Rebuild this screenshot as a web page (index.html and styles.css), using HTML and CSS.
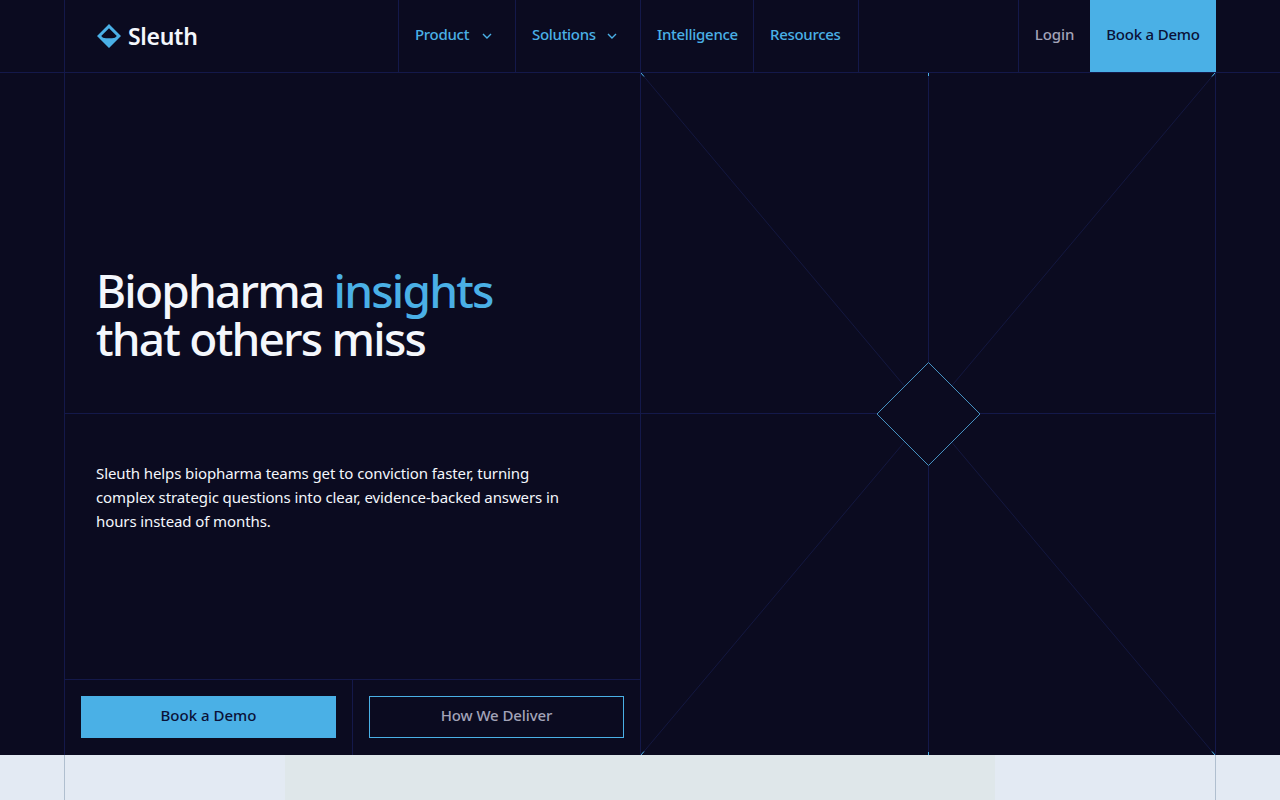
FILE: index.html
```html
<!DOCTYPE html>
<html lang="en">
<head>
  <meta charset="UTF-8">
  <title>Sleuth</title>
  <link rel="stylesheet" href="styles.css">
</head>
<body>
  <header class="topbar">
    <div class="topbar-inner">
      <a class="logo" href="#">
        <svg class="logo-mark" width="24" height="24" viewBox="0 0 24 24">
          <path d="M12 0 24 12 12 24 0 12Z M12 4.2 4.2 12 6 13.8Q12 14.8 18 13.8L19.8 12Z" fill="#4ab0e6" fill-rule="evenodd"/>
        </svg>
        <span>Sleuth</span>
      </a>
      <a class="nav-item" href="#">Product
        <svg class="chevron" width="10" height="6" viewBox="0 0 10 6"><path d="M1 1 5 5 9 1" fill="none" stroke="#4ab0e6" stroke-width="1.4"/></svg>
      </a>
      <a class="nav-item" href="#">Solutions
        <svg class="chevron" width="10" height="6" viewBox="0 0 10 6"><path d="M1 1 5 5 9 1" fill="none" stroke="#4ab0e6" stroke-width="1.4"/></svg>
      </a>
      <a class="nav-item" href="#">Intelligence</a>
      <a class="nav-item" href="#">Resources</a>
      <div class="nav-spacer"></div>
      <a class="nav-login" href="#">Login</a>
      <a class="nav-demo" href="#">Book a Demo</a>
    </div>
  </header>

  <main class="hero">
    <div class="hero-left">
      <div class="hero-title">
        <h1>Biopharma <span class="accent">insights</span><br>that others miss</h1>
      </div>
      <div class="hero-copy">
        <p>Sleuth helps biopharma teams get to conviction faster, turning complex strategic questions into clear, evidence-backed answers in hours instead of months.</p>
      </div>
      <div class="hero-actions">
        <div class="action-cell"><a class="button button-solid" href="#">Book a Demo</a></div>
        <div class="action-cell"><a class="button button-outline" href="#">How We Deliver</a></div>
      </div>
    </div>
    <svg class="hero-art" width="574" height="682" viewBox="0 0 574 682">
      <g stroke="#141840" fill="none">
        <path d="M0 0 574 682M574 0 0 682"/>
      </g>
      <g stroke="#14194a" fill="none">
        <path d="M287.5 0V682M0 340.5H574"/>
      </g>
      <path d="M287.5 289.5 339 341 287.5 392.5 236 341Z" fill="#0b0b20" stroke="#4590c0"/>
      <g stroke="#4ab0e6" fill="none">
        <path d="M287.5 0V3M287.5 682V679M0 0 3 3.5M574 0 571 3.5M0 682 3 678.5M574 682 571 678.5"/>
      </g>
    </svg>
  </main>

  <section class="next-section">
    <div class="next-inner">
      <div class="next-block"></div>
    </div>
  </section>
</body>
</html>
```

FILE: styles.css
```css
* {
  box-sizing: border-box;
}

body {
  margin: 0;
  background-color: #0b0b20;
  color: #f4f7fc;
  font-family: "Noto Sans", sans-serif;
}

a {
  text-decoration: none;
}

.topbar {
  height: 73px;
  border-bottom: 1px solid #14194a;
}

.topbar-inner {
  width: 1152px;
  height: 72px;
  margin: 0 auto;
  border-left: 1px solid #14194a;
  display: grid;
  grid-template-columns: 334px 117px 125px 113px 105px 160px 71px 126px;
}

.logo {
  display: flex;
  align-items: center;
  gap: 7px;
  padding-left: 32px;
  border-right: 1px solid #14194a;
  color: #f4f7fc;
  font-size: 23px;
  font-weight: 600;
  letter-spacing: -0.3px;
}

.nav-item {
  display: flex;
  align-items: center;
  justify-content: space-between;
  padding: 0 23px 4px 16px;
  border-right: 1px solid #14194a;
  color: #4ab0e6;
  font-size: 15px;
  font-weight: 500;
  letter-spacing: -0.3px;
}

.chevron {
  margin-top: 3px;
}

.nav-spacer {
  border-right: 1px solid #14194a;
}

.nav-login {
  display: flex;
  align-items: center;
  justify-content: center;
  padding-bottom: 4px;
  color: #a3a3b8;
  font-size: 15px;
  font-weight: 500;
  letter-spacing: -0.1px;
}

.nav-demo {
  display: flex;
  align-items: center;
  justify-content: center;
  padding-bottom: 4px;
  background-color: #4ab0e6;
  color: #0a1238;
  font-size: 15px;
  font-weight: 500;
  letter-spacing: -0.2px;
}

.hero {
  width: 1152px;
  height: 682px;
  margin: 0 auto;
  border-left: 1px solid #14194a;
  border-right: 1px solid #14194a;
  display: grid;
  grid-template-columns: 576px 574px;
}

.hero-left {
  display: grid;
  grid-template-rows: 341px 266px 75px;
  border-right: 1px solid #14194a;
}

.hero-title {
  display: flex;
  align-items: flex-end;
  padding: 0 31px 51px;
  border-bottom: 1px solid #14194a;
}

h1 {
  margin: 0;
  font-size: 46px;
  font-weight: 500;
  line-height: 48px;
  letter-spacing: -1.8px;
}

.accent {
  color: #4ab0e6;
}

.hero-copy {
  padding: 47px 31px 0;
  border-bottom: 1px solid #14194a;
}

.hero-copy p {
  margin: 0;
  max-width: 480px;
  font-size: 15px;
  line-height: 24px;
  letter-spacing: -0.1px;
}

.hero-actions {
  display: grid;
  grid-template-columns: 288px 287px;
}

.action-cell {
  padding: 16px;
}

.action-cell:first-child {
  border-right: 1px solid #14194a;
}

.button {
  display: flex;
  align-items: center;
  justify-content: center;
  height: 42px;
  padding-bottom: 5px;
  font-size: 15px;
  font-weight: 500;
}

.button-solid {
  background-color: #4ab0e6;
  color: #0a1238;
}

.button-outline {
  border: 1px solid #4ab0e6;
  color: #a3a3b8;
  letter-spacing: -0.1px;
}

.hero-art {
  display: block;
}

.next-section {
  height: 45px;
  background-color: #e3eaf3;
}

.next-inner {
  width: 1152px;
  height: 100%;
  margin: 0 auto;
  border-left: 1px solid #b0bfcf;
  border-right: 1px solid #b0bfcf;
  display: flex;
  justify-content: center;
}

.next-block {
  width: 710px;
  background-color: #dfe7ea;
}
```
